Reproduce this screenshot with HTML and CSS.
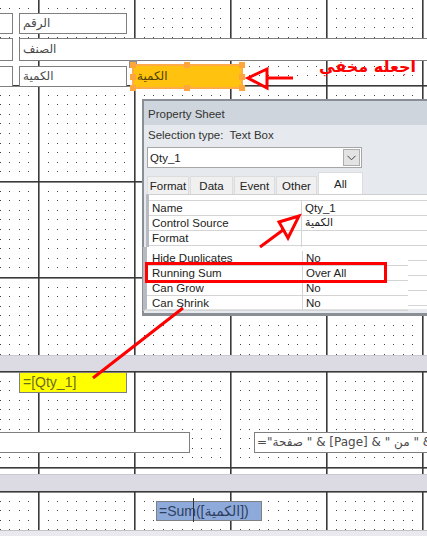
FILE: index.html
```html
<!DOCTYPE html>
<html lang="ar">
<head>
<meta charset="utf-8">
<title>Report Design</title>
<link rel="stylesheet" href="styles.css">
</head>
<body>
<div class="designer">
  <section class="sec sec-detail">
    <div class="ctl c-cut r1"></div>
    <div class="ctl c-lbl r1">الرقم</div>
    <div class="ctl c-cut r2"></div>
    <div class="ctl c-wide r2">الصنف</div>
    <div class="ctl c-cut r3"></div>
    <div class="ctl c-lbl r3">الكمية</div>
    <div class="grip"></div>
    <div class="sel">
      <span class="sel-text">الكمية</span>
      <i class="h h-tl"></i><i class="h h-tm"></i><i class="h h-tr"></i>
      <i class="h h-ml"></i><i class="h h-mr"></i>
      <i class="h h-bl"></i><i class="h h-bm"></i><i class="h h-br"></i>
    </div>
  </section>
  <div class="band band1"></div>
  <section class="sec sec-page">
    <div class="ctl c-yellow">=[Qty_1]</div>
    <div class="ctl c-foot-a"></div>
    <div class="ctl c-foot-b" dir="ltr">="صفحة " &amp; [Page] &amp; " من " &amp;</div>
  </section>
  <div class="band band2"></div>
  <section class="sec sec-report">
    <div class="ctl c-blue" dir="ltr">=Sum([الكمية])<span class="caret"></span></div>
  </section>
  <div class="band band3"></div>

  <div class="ps">
    <div class="ps-title">Property Sheet</div>
    <div class="ps-body">
      <div class="ps-sel">Selection type:&nbsp; Text Box</div>
      <div class="ps-combo">
        <span class="ps-combo-text">Qty_1</span>
        <span class="ps-drop"><svg width="9" height="6" viewBox="0 0 9 6"><path d="M0.5 0.8 L4.5 4.8 L8.5 0.8" fill="none" stroke="#444" stroke-width="1"/></svg></span>
      </div>
      <div class="ps-tabs">
        <span class="tab t-format">Format</span>
        <span class="tab t-data">Data</span>
        <span class="tab t-event">Event</span>
        <span class="tab t-other">Other</span>
        <span class="tab t-all on">All</span>
      </div>
      <div class="ps-panel">
        <div class="grid">
          <div class="row"><span class="k">Name</span><span class="v">Qty_1</span></div>
          <div class="row"><span class="k">Control Source</span><span class="v ar">الكمية</span></div>
          <div class="row"><span class="k">Format</span><span class="v"></span></div>
          <div class="row"><span class="k"></span><span class="v"></span></div>
          <div class="row"><span class="k"></span><span class="v"></span></div>
          <div class="row"><span class="k"></span><span class="v"></span></div>
          <div class="row"><span class="k"></span><span class="v"></span></div>
        </div>
      </div>
      <div class="paste">
        <div class="prow"><span class="k">Hide Duplicates</span><span class="v">No</span></div>
        <div class="prow"><span class="k">Running Sum</span><span class="v">Over All</span></div>
        <div class="prow"><span class="k">Can Grow</span><span class="v">No</span></div>
        <div class="prow"><span class="k">Can Shrink</span><span class="v">No</span></div>
      </div>
    </div>
  </div>

  <svg class="annot" width="427" height="536" viewBox="0 0 427 536">
    <g fill="none" stroke="#ff0000" stroke-width="3" stroke-linejoin="miter">
      <polygon points="248,78 267,69 267,88"/>
      <line x1="267" y1="78" x2="293" y2="78"/>
      <polygon points="299,216 279,222 288,238"/>
      <line x1="260" y1="247" x2="283" y2="230"/>
      <rect x="146.5" y="263.5" width="239" height="18"/>
      <line x1="183" y1="308" x2="93" y2="378"/>
    </g>
  </svg>
  <div class="note">اجعله مخفي</div>
</div>
</body>
</html>
```

FILE: styles.css
```css
* { box-sizing: border-box; }
html, body { margin: 0; padding: 0; }
body {
  width: 427px;
  height: 536px;
  overflow: hidden;
  background: #fff;
  font-family: "Liberation Sans", "DejaVu Sans", sans-serif;
}
.designer { position: relative; width: 427px; height: 536px; overflow: hidden; }

.sec {
  position: relative;
  background-color: #fff;
  background-repeat: repeat;
  background-image: url("data:image/svg+xml;utf8,<svg xmlns='http://www.w3.org/2000/svg' width='96' height='96'><defs><g id='c'><rect y='10' width='1' height='1'/><rect y='19' width='1' height='1'/><rect y='29' width='1' height='1'/><rect y='38' width='1' height='1'/><rect y='48' width='1' height='1'/><rect y='58' width='1' height='1'/><rect y='67' width='1' height='1'/><rect y='77' width='1' height='1'/><rect y='86' width='1' height='1'/></g></defs><g fill='%23444'><use href='%23c' x='10'/><use href='%23c' x='19'/><use href='%23c' x='29'/><use href='%23c' x='38'/><use href='%23c' x='48'/><use href='%23c' x='58'/><use href='%23c' x='67'/><use href='%23c' x='77'/><use href='%23c' x='86'/></g><rect x='0' y='0' width='1.6' height='96' fill='%233a3a3a'/><rect x='0' y='0' width='96' height='1.6' fill='%233a3a3a'/></svg>");
}
.sec-detail { height: 355px; background-position: 38px -11px; }
.sec-page { height: 103px; background-position: 38px 0; }
.sec-report { height: 39px; background-position: 38px 0; }

.band { background: #dcdbe4; border-top: 1px solid #c9c9d0; }
.band1 { height: 16px; }
.band2 { height: 17px; }
.band3 { height: 8px; background: #e9e9ef; border-top: 1px solid #c4c4c8; }

.ctl {
  position: absolute;
  height: 21px;
  background: #fff;
  border: 1px solid #7f7f7f;
  padding-left: 3px;
  font-family: "DejaVu Sans", sans-serif;
  font-size: 12px;
  line-height: 19px;
  color: #4a4a4a;
  white-space: nowrap;
  overflow: hidden;
}
.c-cut { left: -2px; width: 15px; }
.c-lbl { left: 19px; width: 108px; }
.c-wide { left: 19px; width: 420px; }
.r1 { top: 13px; }
.r2 { top: 38px; height: 23px; line-height: 21px; }
.r3 { top: 66px; }

.grip { position: absolute; left: 129px; top: 60px; width: 8px; height: 8px; background: #8e8e8e; }
.sel {
  position: absolute;
  left: 132px; top: 64px;
  width: 111px; height: 25px;
  background: #ffc20e;
  border: 2px solid #ffab47;
  font-family: "DejaVu Sans", sans-serif;
  font-size: 12px;
  line-height: 21px;
  color: #4d3d00;
  padding-left: 3px;
}
.h { position: absolute; width: 6px; height: 6px; background: #ffa53d; }
.h-tl { left: -4px; top: -4px; }
.h-tm { left: 50px; top: -4px; }
.h-tr { right: -4px; top: -4px; }
.h-ml { left: -4px; top: 8px; }
.h-mr { right: -4px; top: 8px; }
.h-bl { left: -4px; bottom: -4px; }
.h-bm { left: 50px; bottom: -4px; }
.h-br { right: -4px; bottom: -4px; }

.c-yellow {
  left: 19px; top: 1px; width: 108px;
  background: #ffff00;
  color: #6a6a20;
  font-family: "Liberation Sans", sans-serif;
  font-size: 14px;
}
.c-foot-a { left: -2px; top: 61px; width: 192px; }
.c-foot-b { left: 254px; top: 61px; width: 190px; padding-left: 2px; font-family: "DejaVu Sans", sans-serif; font-size: 12px; color: #4a4a4a; }
.c-blue {
  left: 156px; top: 10px; width: 106px; height: 20px;
  background: #8eaadb;
  color: #2f3f5f;
  font-family: "Liberation Sans", "DejaVu Sans", sans-serif;
  font-size: 14px;
  line-height: 18px;
  padding-left: 2px;
  overflow: visible;
}
.caret { position: absolute; left: 36px; top: -4px; width: 1px; height: 24px; background: #333; }

/* Property sheet */
.ps {
  position: absolute;
  left: 142px; top: 99px;
  width: 300px; height: 217px;
  background: #e6e9ed;
  border-top: 2px solid #8a8f95;
  border-left: 2px solid #8a8f95;
  border-bottom: 3px solid #8a8f95;
  font-family: "Liberation Sans", sans-serif;
  font-size: 11.5px;
  color: #222;
}
.ps-title { height: 24px; line-height: 26px; padding-left: 4px; background: #cfd5dc; color: #333; font-size: 11.5px; }
.ps-body { position: relative; padding-left: 3px; }
.ps-sel { height: 18px; line-height: 18px; padding-left: 1px; margin-top: 1px; color: #333; }
.ps-combo {
  display: flex; align-items: center; justify-content: space-between;
  width: 215px; height: 21px; margin-top: 3px;
  background: #fff; border: 1px solid #a6a6a6;
  padding-left: 2px; padding-right: 1px;
}
.ps-drop {
  display: flex; align-items: center; justify-content: center;
  width: 17px; height: 17px;
  background: #e3e3e3; border: 1px solid #adadad;
}
.ps-tabs { display: flex; align-items: flex-end; height: 22px; margin-top: 4px; gap: 1px; }
.tab {
  display: flex; align-items: center; justify-content: center;
  height: 18px; background: #f0f0f0; border: 1px solid #dcdcdc; border-bottom: none;
  color: #222;
}
.tab.on { height: 22px; background: #fff; }
.t-format { width: 42px; }
.t-data { width: 43px; }
.t-event { width: 41px; }
.t-other { width: 41px; }
.t-all { width: 45px; }
.ps-panel {
  height: 115px;
  margin-left: -1px;
  background: #fff;
  border-left: 3px solid #b7bbc1;
  border-top: 1px solid #cfcfcf;
  padding-top: 5px;
}
.row, .prow { display: flex; height: 15px; border-bottom: 1px solid #d4d4d4; line-height: 14px; }
.grid { border-top: 1px solid #d4d4d4; }
.k { width: 153px; padding-left: 3px; border-right: 1px solid #d4d4d4; white-space: nowrap; }
.v { padding-left: 3px; white-space: nowrap; }
.ar { font-family: "DejaVu Sans", sans-serif; font-size: 11px; }

.paste {
  position: absolute;
  left: -1px; top: 121px;
  width: 265px; height: 64px;
  background: #fff;
  border-left: 4px solid #b7bbc1;
  border-bottom: 2px solid #e0e0e0;
  padding-top: 4px;
  font-size: 11.5px;
}
.paste .prow { line-height: 14px; }
.paste .k { width: 156px; padding-left: 5px; }

.annot { position: absolute; left: 0; top: 0; pointer-events: none; }
.note {
  position: absolute;
  left: 319px; top: 57px;
  font-family: "DejaVu Sans", sans-serif;
  font-weight: bold;
  font-size: 16px;
  color: #ff0000;
  direction: rtl;
}
```
